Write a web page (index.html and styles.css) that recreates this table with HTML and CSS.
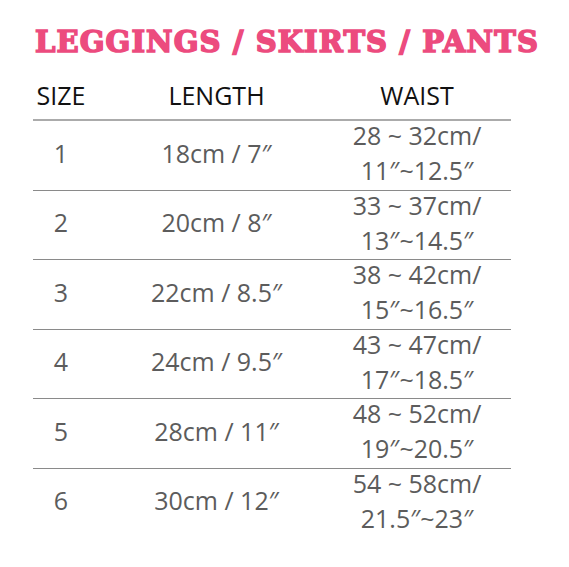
FILE: index.html
```html
<!DOCTYPE html>
<html lang="en">
<head>
<meta charset="utf-8">
<title>Leggings / Skirts / Pants size chart</title>
<link rel="stylesheet" href="styles.css">
</head>
<body>
<div class="page">
  <h1 class="title">LEGGINGS / SKIRTS / PANTS</h1>
  <div class="chart">
    <div class="row head">
      <div class="cell c-size">SIZE</div>
      <div class="cell c-length">LENGTH</div>
      <div class="cell c-waist">WAIST</div>
    </div>
    <div class="row first">
      <div class="cell c-size">1</div>
      <div class="cell c-length">18cm / 7″</div>
      <div class="cell c-waist">28 ~ 32cm/<br>11″~12.5″</div>
    </div>
    <div class="row">
      <div class="cell c-size">2</div>
      <div class="cell c-length">20cm / 8″</div>
      <div class="cell c-waist">33 ~ 37cm/<br>13″~14.5″</div>
    </div>
    <div class="row">
      <div class="cell c-size">3</div>
      <div class="cell c-length">22cm / 8.5″</div>
      <div class="cell c-waist">38 ~ 42cm/<br>15″~16.5″</div>
    </div>
    <div class="row">
      <div class="cell c-size">4</div>
      <div class="cell c-length">24cm / 9.5″</div>
      <div class="cell c-waist">43 ~ 47cm/<br>17″~18.5″</div>
    </div>
    <div class="row">
      <div class="cell c-size">5</div>
      <div class="cell c-length">28cm / 11″</div>
      <div class="cell c-waist">48 ~ 52cm/<br>19″~20.5″</div>
    </div>
    <div class="row">
      <div class="cell c-size">6</div>
      <div class="cell c-length">30cm / 12″</div>
      <div class="cell c-waist">54 ~ 58cm/<br>21.5″~23″</div>
    </div>
  </div>
</div>
</body>
</html>
```

FILE: styles.css
```css
html, body {
  margin: 0;
  padding: 0;
  background: #ffffff;
}

.page {
  width: 569px;
  height: 567px;
  overflow: hidden;
  padding-top: 24px;
  box-sizing: border-box;
}

.title {
  margin: 0 0 0 35px;
  font-family: "DejaVu Serif", serif;
  font-weight: bold;
  font-size: 29px;
  line-height: 36px;
  color: #ec4b7e;
  white-space: nowrap;
  letter-spacing: 1.1px;
  -webkit-text-stroke: 1.6px #ec4b7e;
}

.chart {
  margin: 18px 0 0 33px;
  width: 478px;
  font-family: "Open Sans", sans-serif;
  font-size: 25px;
  color: #5c5c5c;
}

.row {
  display: flex;
  align-items: center;
  padding-right: 21px;
  border-top: 1.5px solid #8a8a8a;
}

.row.head {
  border-top: none;
  color: #111111;
  line-height: 35px;
  padding-bottom: 6px;
}

.row.first {
  border-top: 2px solid #ababab;
}

.cell {
  text-align: center;
  line-height: 35px;
}

.row:not(.head) .cell {
  margin: -3px 0 1.5px;
}

.c-size {
  width: 56px;
}

.c-length {
  width: 255px;
}

.c-waist {
  width: 146px;
  white-space: nowrap;
}
```
